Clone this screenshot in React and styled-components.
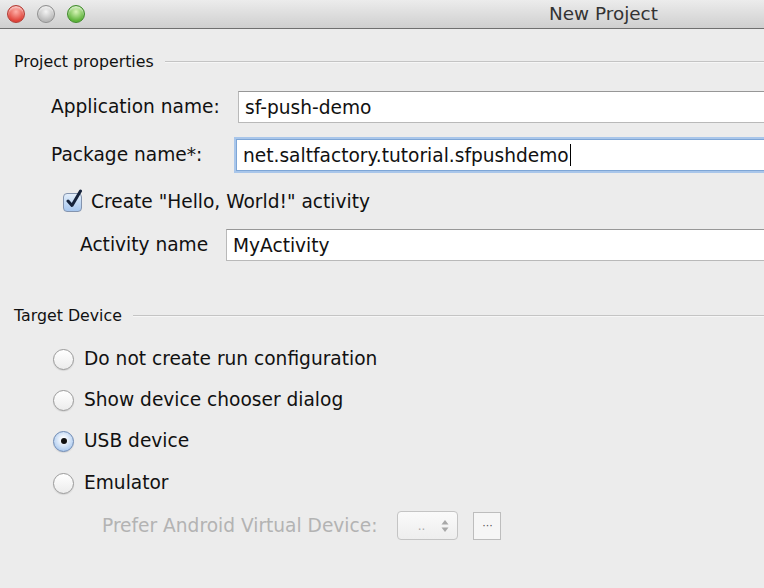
import React from 'react'
import styled, { createGlobalStyle } from 'styled-components'

const Global = createGlobalStyle`
  html, body { margin: 0; padding: 0; background: #ececec; }
  body { width: 764px; height: 588px; overflow: hidden; font-family: "DejaVu Sans", "Liberation Sans", sans-serif; color: #111; }
`

const Window = styled.div`
  width: 764px;
  height: 588px;
  background: #ececec;
  display: flex;
  flex-direction: column;
`

const TitleBar = styled.div`
  height: 28px;
  flex: none;
  background: linear-gradient(#ececec, #cfcfcf);
  border-bottom: 1px solid #6f6f6f;
  display: flex;
  align-items: center;
  padding-left: 7px;
  gap: 12px;
  position: relative;
`

const Light = styled.span`
  width: 16px;
  height: 16px;
  border-radius: 50%;
  background: ${p => p.$bg};
  border: 1px solid ${p => p.$edge};
  box-shadow: inset 0 2px 2px rgba(255,255,255,0.6);
`

const Title = styled.div`
  position: absolute;
  left: 549px;
  top: 3px;
  font-size: 18.4px;
  color: #333;
`

const Body = styled.div`
  padding: 23px 0 0 14px;
  display: flex;
  flex-direction: column;
`

const Section = styled.div`
  display: flex;
  align-items: center;
  gap: 11px;
  font-size: 15.8px;
  line-height: 20px;
  margin-top: ${p => p.$top || 0}px;
  &::after {
    content: '';
    flex: 1;
    height: 1px;
    background: #c4c4c4;
    border-bottom: 1px solid #f6f6f6;
  }
`

const Row = styled.div`
  display: flex;
  align-items: center;
  padding-left: ${p => p.$indent}px;
  margin-top: ${p => p.$top}px;
`

const Label = styled.div`
  font-size: 18.6px;
  line-height: 22px;
  width: ${p => p.$w}px;
  flex: none;
`

const Field = styled.div`
  flex: 1;
  height: 30px;
  background: #fff;
  border: 1px solid #b9b9b9;
  border-top-color: #979797;
  border-right: none;
  display: flex;
  align-items: center;
  padding-left: 6px;
  font-size: 18.6px;
  ${p => p.$focus && `
    border-color: #7ea6d6;
    box-shadow: 0 0 0 2px #a9c6ea;
  `}
`

const Caret = styled.span`
  display: inline-block;
  width: 1px;
  height: 22px;
  background: #000;
  margin-left: 1px;
`

const Check = styled.span`
  position: relative;
  width: 17px;
  height: 17px;
  border-radius: 4px;
  border: 1px solid #8494ae;
  background: linear-gradient(#e3eefa, #a6c6ee);
  margin: 0 9px 0 1px;
  flex: none;
  svg {
    position: absolute;
    left: 1px;
    top: -5px;
  }
`

const Radio = styled.span`
  width: 19px;
  height: 19px;
  border-radius: 50%;
  border: 1px solid ${p => p.$on ? '#6d89b3' : '#9a9a9a'};
  background: ${p => p.$on ? 'radial-gradient(circle at 50% 40%, #ffffff 10%, #a9c8ee 80%)' : 'linear-gradient(#ffffff, #ececec)'};
  box-shadow: 0 1px 1px rgba(0,0,0,0.1);
  display: flex;
  align-items: center;
  justify-content: center;
  margin-right: 10px;
  flex: none;
  &::after {
    content: '';
    width: 6px;
    height: 6px;
    border-radius: 50%;
    background: #111;
    display: ${p => p.$on ? 'block' : 'none'};
  }
`

const Text = styled.span`
  font-size: 18.6px;
  line-height: 22px;
  color: ${p => p.$dim ? '#b3b3b3' : '#111'};
`

const Combo = styled.div`
  width: 61px;
  height: 29px;
  border: 1px solid #c4c4c4;
  border-radius: 4px;
  background: linear-gradient(#fafafa, #eeeeee);
  display: flex;
  align-items: center;
  justify-content: flex-end;
  gap: 16px;
  padding-right: 8px;
  box-sizing: border-box;
  margin-left: 20px;
  color: #aaa;
  font-size: 12px;
`

const Dots = styled.div`
  width: 28px;
  height: 28px;
  border: 1px solid #bdbdbd;
  background: #f6f6f6;
  box-sizing: border-box;
  margin-left: 15px;
  display: flex;
  align-items: center;
  justify-content: center;
  font-size: 11px;
  color: #555;
`

const radios = [
  { label: 'Do not create run configuration', top: 22 },
  { label: 'Show device chooser dialog', top: 19 },
  { label: 'USB device', top: 19, on: true },
  { label: 'Emulator', top: 20 },
]

export default function App() {
  return (
    <Window>
      <Global />
      <TitleBar>
        <Light $bg="radial-gradient(circle at 50% 35%, #ffb0a8, #e0443a 70%)" $edge="#b23a33" />
        <Light $bg="radial-gradient(circle at 50% 35%, #f4f4f4, #b9b9b9 70%)" $edge="#8f8f8f" />
        <Light $bg="radial-gradient(circle at 50% 35%, #d8f5b8, #5fb43b 70%)" $edge="#3f8a2a" />
        <Title>New Project</Title>
      </TitleBar>
      <Body>
        <Section>Project properties</Section>
        <Row $indent={37} $top={19}>
          <Label $w={187}>Application name:</Label>
          <Field>sf-push-demo</Field>
        </Row>
        <Row $indent={37} $top={16}>
          <Label $w={185}>Package name*:</Label>
          <Field $focus>net.saltfactory.tutorial.sfpushdemo<Caret /></Field>
        </Row>
        <Row $indent={48} $top={20}>
          <Check>
            <svg width="18" height="20" viewBox="0 0 18 20">
              <path d="M3 12 L7 16.5 L15.5 2" fill="none" stroke="#16233b" strokeWidth="3" strokeLinecap="round" strokeLinejoin="round" />
            </svg>
          </Check>
          <Text>Create "Hello, World!" activity</Text>
        </Row>
        <Row $indent={66} $top={16}>
          <Label $w={146}>Activity name</Label>
          <Field>MyActivity</Field>
        </Row>
        <Section $top={45}>Target Device</Section>
        {radios.map(r => (
          <Row key={r.label} $indent={39} $top={r.top}>
            <Radio $on={r.on} />
            <Text>{r.label}</Text>
          </Row>
        ))}
        <Row $indent={88} $top={17}>
          <Text $dim>Prefer Android Virtual Device:</Text>
          <Combo>
            <span>..</span>
            <svg width="8" height="14" viewBox="0 0 8 14">
              <path d="M4 1 L7.5 5.5 L0.5 5.5 Z M4 13 L7.5 8.5 L0.5 8.5 Z" fill="#a8a8a8" />
            </svg>
          </Combo>
          <Dots>···</Dots>
        </Row>
      </Body>
    </Window>
  )
}
